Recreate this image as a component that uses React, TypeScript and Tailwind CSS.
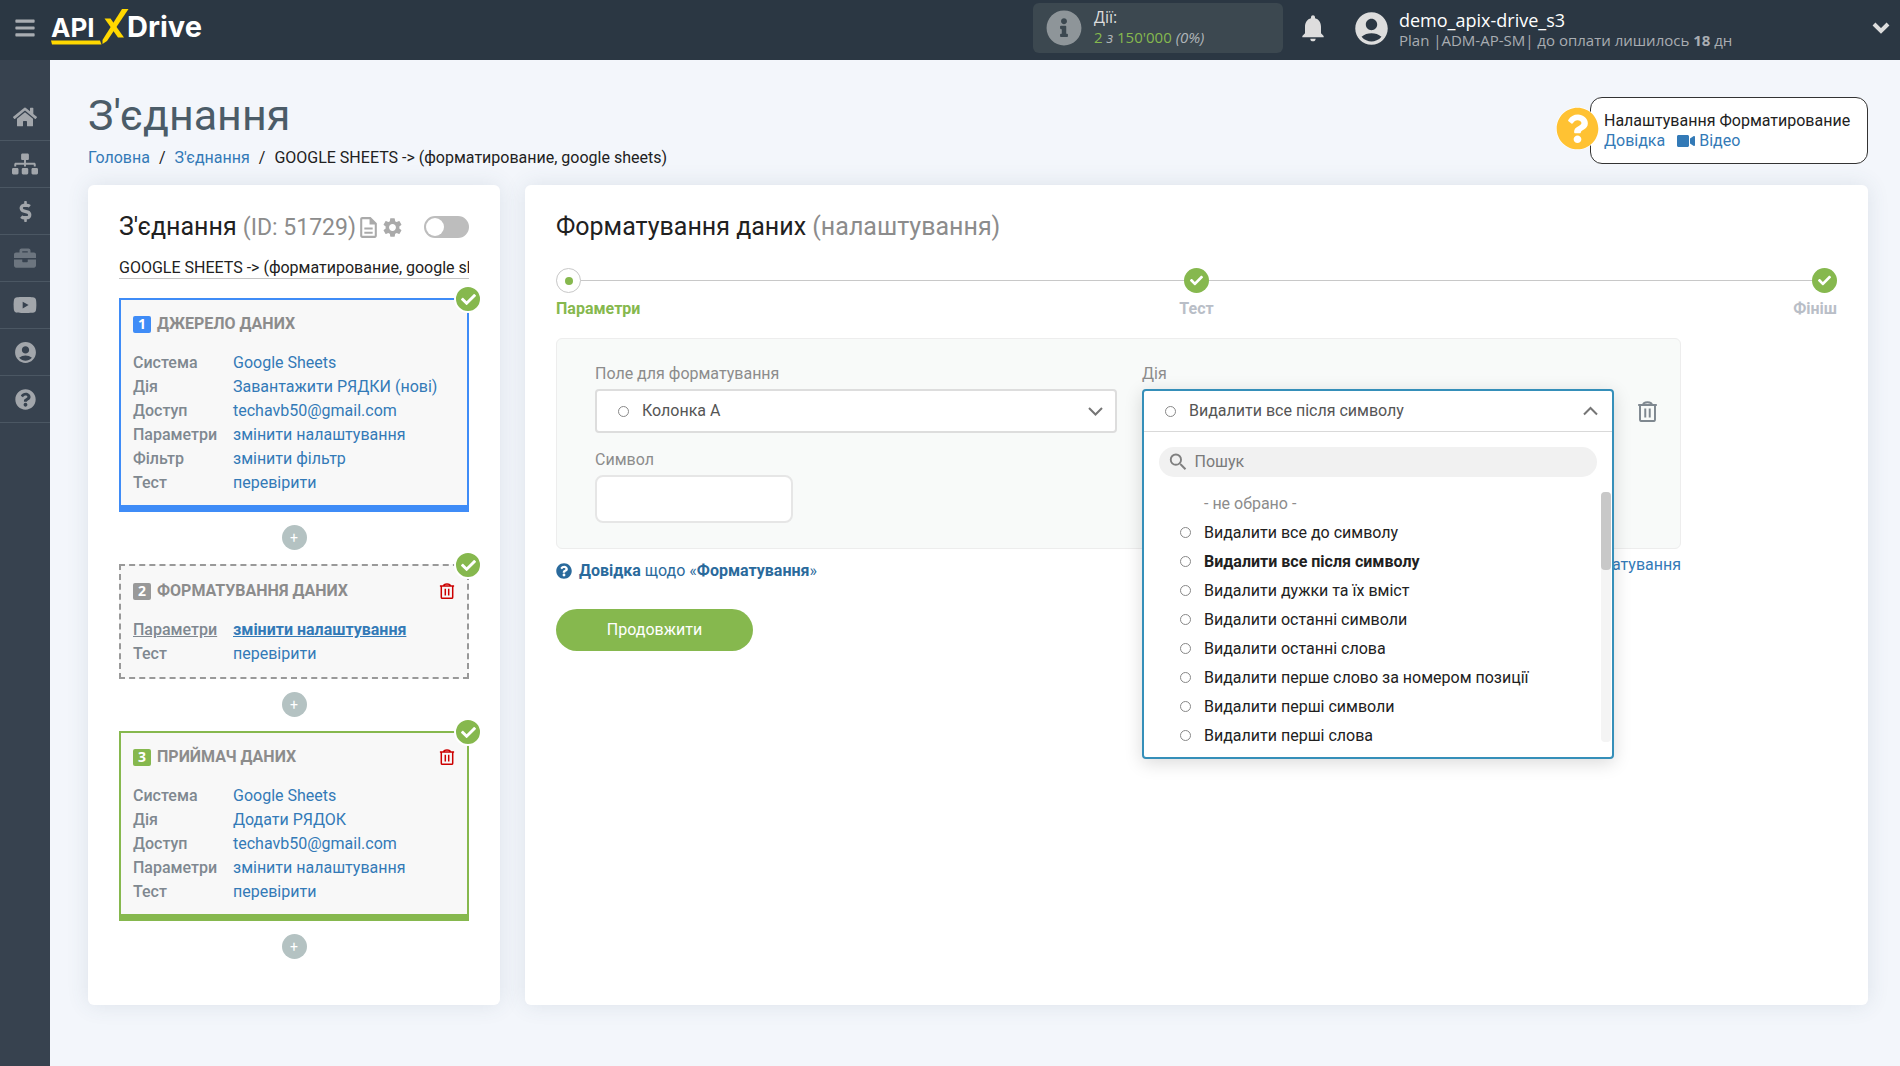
import { useState } from 'react';
import {
  FaBars,
  FaBriefcase,
  FaCheck,
  FaDollarSign,
  FaHome,
  FaInfoCircle,
  FaQuestionCircle,
  FaSitemap,
  FaVideo,
  FaYoutube,
} from 'react-icons/fa';
import { MdAccountCircle, MdNotifications, MdOutlineDescription, MdSearch, MdSettings } from 'react-icons/md';

type Row = { label: string; value: string; active?: boolean };

type Block = {
  number: number;
  title: string;
  rows: Row[];
  frame: string;
  badge: string;
  removable?: boolean;
};

const blocks: Block[] = [
  {
    number: 1,
    title: 'ДЖЕРЕЛО ДАНИХ',
    frame: 'border-2 border-b-7 border-[#3f8cf7] pt-3 pb-[10px]',
    badge: 'bg-[#3f8cf7]',
    rows: [
      { label: 'Система', value: 'Google Sheets' },
      { label: 'Дія', value: 'Завантажити РЯДКИ (нові)' },
      { label: 'Доступ', value: 'techavb50@gmail.com' },
      { label: 'Параметри', value: 'змінити налаштування' },
      { label: 'Фільтр', value: 'змінити фільтр' },
      { label: 'Тест', value: 'перевірити' },
    ],
  },
  {
    number: 2,
    title: 'ФОРМАТУВАННЯ ДАНИХ',
    frame: 'border-2 border-dashed border-[#999999] pt-[13px] pb-[11px]',
    badge: 'bg-[#999999]',
    removable: true,
    rows: [
      { label: 'Параметри', value: 'змінити налаштування', active: true },
      { label: 'Тест', value: 'перевірити' },
    ],
  },
  {
    number: 3,
    title: 'ПРИЙМАЧ ДАНИХ',
    frame: 'border-2 border-b-7 border-[#86b84e] pt-3 pb-[10px]',
    badge: 'bg-[#86b84e]',
    removable: true,
    rows: [
      { label: 'Система', value: 'Google Sheets' },
      { label: 'Дія', value: 'Додати РЯДОК' },
      { label: 'Доступ', value: 'techavb50@gmail.com' },
      { label: 'Параметри', value: 'змінити налаштування' },
      { label: 'Тест', value: 'перевірити' },
    ],
  },
];

const menu = [
  { label: 'Головна', icon: FaHome, size: 24 },
  { label: "З'єднання", icon: FaSitemap, size: 26 },
  { label: 'Оплата', icon: FaDollarSign, size: 21 },
  { label: 'Проєкти', icon: FaBriefcase, size: 22, dim: true },
  { label: 'Відео', icon: FaYoutube, size: 24 },
  { label: 'Профіль', icon: MdAccountCircle, size: 25 },
  { label: 'Довідка', icon: FaQuestionCircle, size: 21 },
];

const actions = [
  'Видалити все до символу',
  'Видалити все після символу',
  'Видалити дужки та їх вміст',
  'Видалити останні символи',
  'Видалити останні слова',
  'Видалити перше слово за номером позиції',
  'Видалити перші символи',
  'Видалити перші слова',
];

function TrashIcon({ size }: { size: number }) {
  return (
    <svg width={size} height={size} viewBox="0 0 16 16" fill="none" stroke="currentColor" strokeWidth="1.5">
      <path d="M0.9 3H15.1M4.7 3C4.7 0.2 11.3 0.2 11.3 3M2.3 3V14.2Q2.3 15.3 3.4 15.3H12.6Q13.7 15.3 13.7 14.2V3M6.3 5.8V12.6M9.7 5.8V12.6" />
    </svg>
  );
}

function Logo() {
  return (
    <a href="#" aria-label="APIXDrive" className="flex">
      <svg width="156" height="40" viewBox="0 0 156 40" className="font-['Inter',sans-serif]">
        <text x="1" y="29" fontSize="26" fontWeight="700" fill="#fff">API</text>
        <text x="77" y="29" fontSize="29" fontWeight="700" fill="#fff">Drive</text>
        <path d="M1 32.5H50L51.5 36.5H2Z" fill="#ffd800" />
        <path d="M72 1H78.5L57 33L52.5 36V32Z" fill="#ffd800" />
        <path d="M54.5 10.5H60.5L74 29.5H68Z" fill="#ffd800" />
      </svg>
    </a>
  );
}

function Header() {
  return (
    <header className="flex h-15 items-center bg-[#2b3743] pb-1 text-[#dddddd] font-['Open_Sans','Noto_Sans',sans-serif]">
      <button aria-label="Меню" className="flex w-[50px] justify-center text-[#a9adb2]">
        <FaBars size={22} />
      </button>
      <Logo />
      <div className="ml-auto flex h-[50px] w-[250px] items-center gap-3 rounded-md bg-[#3c4850] pl-[13px]">
        <FaInfoCircle size={36} className="text-[#8e9599]" />
        <div className="pb-[2px] text-[15px] leading-5">
          <div className="text-base leading-5">Дії:</div>
          <div className="italic text-[#b0b5b9]">
            <span className="not-italic text-[#86b84e]">2</span> з <span className="not-italic text-[#86b84e]">150'000</span> (0%)
          </div>
        </div>
      </div>
      <button aria-label="Сповіщення" className="ml-[14px] w-8">
        <MdNotifications size={32} />
      </button>
      <div className="ml-[23px] flex w-[520px] items-center gap-2">
        <MdAccountCircle size={39} />
        <div className="pt-1">
          <div className="text-lg leading-5 text-white">demo_apix-drive_s3</div>
          <div className="text-[15px] leading-5 text-[#a9adb2]">
            Plan |ADM-AP-SM| до оплати лишилось <b>18</b> дн
          </div>
        </div>
      </div>
      <button aria-label="Розгорнути" className="mr-[10px]">
        <svg width="18" height="14" viewBox="0 0 18 14" fill="none" stroke="currentColor" strokeWidth="4">
          <path d="M2 3L9 10L16 3" />
        </svg>
      </button>
    </header>
  );
}

function Sidebar() {
  return (
    <nav className="w-[50px] shrink-0 bg-[#37424f] pt-[34px]">
      {menu.map(({ label, icon: Icon, size, dim }) => (
        <a
          key={label}
          href="#"
          aria-label={label}
          className={`flex h-[47px] items-center justify-center border-b border-[#4b5763] ${dim ? 'text-[#6c757f]' : 'text-[#a2a6ab]'}`}
        >
          <Icon size={size} />
        </a>
      ))}
    </nav>
  );
}

function BlockCard({ block }: { block: Block }) {
  return (
    <section className={`relative bg-[#f8f8f8] px-3 ${block.frame}`}>
      <span className="absolute -top-[15px] -right-[15px] flex size-7 items-center justify-center rounded-full border-2 border-white bg-[#86b84e] text-white">
        <FaCheck size={15} />
      </span>
      <h3 className="flex h-6 items-center gap-[6px] text-base font-bold text-[#8c8c8c]">
        <span className={`flex h-[17px] w-[18px] items-center justify-center rounded-xs text-sm text-white font-['Open_Sans',sans-serif] ${block.badge}`}>
          {block.number}
        </span>
        {block.title}
        {block.removable && (
          <button aria-label="Видалити" className="ml-auto text-[#cc0000]">
            <TrashIcon size={16} />
          </button>
        )}
      </h3>
      <dl className="mt-[15px]">
        {block.rows.map((row) => (
          <div key={row.label} className="flex leading-6">
            <dt className="w-[100px] font-medium text-[#7f8890]">
              <span className={row.active ? 'underline' : ''}>{row.label}</span>
            </dt>
            <dd>
              <a href="#" className={row.active ? 'font-bold text-[#337ab7] underline' : 'text-[#337ab7]'}>{row.value}</a>
            </dd>
          </div>
        ))}
      </dl>
    </section>
  );
}

function ConnectionPanel() {
  return (
    <aside className="w-[412px] shrink-0 rounded-md bg-white px-[31px] pt-7 pb-8 shadow-[0_0_22px_rgba(60,80,110,0.12)]">
      <div className="flex h-7 items-center">
        <h2 className="text-[25px] leading-7 text-[#212121]">
          З'єднання <span className="text-[23px] text-[#8c8c8c]">(ID: 51729)</span>
        </h2>
        <MdOutlineDescription size={25} className="text-[#aaaaaa]" />
        <MdSettings size={23} className="text-[#aaaaaa]" />
        <input
          type="checkbox"
          aria-label="Увімкнути з'єднання"
          className="ml-auto h-[22px] w-[45px] appearance-none rounded-full border-2 border-[#bdbdbd] bg-[#bdbdbd] before:block before:size-[18px] before:rounded-full before:bg-white"
        />
      </div>
      <input
        aria-label="Назва з'єднання"
        defaultValue="GOOGLE SHEETS -> (форматирование, google sheets)"
        className="mt-4 mb-[19px] block h-[22px] w-full border-b border-[#c4c4c4] text-base text-[#212121] outline-none"
      />
      {blocks.map((block) => (
        <div key={block.number}>
          <BlockCard block={block} />
          <button
            aria-label="Додати блок"
            className="mx-auto mt-[13px] mb-[14px] flex size-[25px] items-center justify-center rounded-full bg-[#b4c2c2] text-sm leading-none text-white"
          >
            +
          </button>
        </div>
      ))}
    </aside>
  );
}

function Stepper() {
  return (
    <ol className="relative mt-[27px] flex justify-between font-bold text-[#b9bec7] before:absolute before:inset-x-0 before:top-3 before:h-px before:bg-[#c8c8c8]">
      <li className="relative w-[90px] text-[#86b84e]">
        <span className="flex size-[25px] items-center justify-center rounded-full border border-[#c8c8c8] bg-white">
          <i className="size-2 rounded-full bg-[#86b84e]" />
        </span>
        <span className="mt-1 block leading-6">Параметри</span>
      </li>
      {['Тест', 'Фініш'].map((step) => (
        <li key={step} className="relative flex w-[90px] flex-col items-center last:items-end">
          <span className="flex size-[25px] items-center justify-center rounded-full bg-[#86b84e] text-white">
            <FaCheck size={13} />
          </span>
          <span className="mt-1 block leading-6">{step}</span>
        </li>
      ))}
    </ol>
  );
}

function ActionSelect() {
  const [selected, setSelected] = useState(actions[1]);
  const [open, setOpen] = useState(true);

  return (
    <div className="relative h-11">
      <div className="absolute inset-x-0 top-0 z-10 rounded-sm border-2 border-[#358fb9] bg-white shadow-[0_4px_18px_rgba(0,0,0,0.15)]">
        <button
          aria-labelledby="action-label"
          aria-expanded={open}
          onClick={() => setOpen(!open)}
          className="flex h-[41px] w-full items-center border-b border-[#d9d9d9] pl-[21px] pr-[14px] text-[#555555]"
        >
          <span className="mr-[13px] size-[11px] rounded-full border border-[#888888]" />
          {selected}
          <svg width="15" height="10" viewBox="0 0 15 10" fill="none" stroke="#757575" strokeWidth="2" className="ml-auto">
            <path d="M1 8.5L7.5 2L14 8.5" />
          </svg>
        </button>
        {open && (
          <div className="pt-[15px] pb-[15px]">
            <label className="mx-[15px] flex h-[30px] items-center gap-[5px] rounded-full bg-[#f1f1f1] pl-2">
              <MdSearch size={24} className="text-[#808080]" />
              <input placeholder="Пошук" aria-label="Пошук" className="w-full outline-none placeholder:text-[#7a7a7a]" />
            </label>
            <div className="mt-[15px] flex justify-between pr-px">
              <div role="radiogroup" aria-labelledby="action-label" className="h-[250px] leading-[29px] text-[#212121]">
                <div className="-mt-[3px] pl-15 text-[#8c8c8c]">- не обрано -</div>
                {actions.map((action) => (
                  <label key={action} className={`flex items-center pl-9 ${action === selected ? 'font-bold' : ''}`}>
                    <input
                      type="radio"
                      name="action"
                      checked={action === selected}
                      onChange={() => setSelected(action)}
                      className="mr-[13px] size-[11px] appearance-none rounded-full border border-[#888888]"
                    />
                    {action}
                  </label>
                ))}
              </div>
              <div className="h-[250px] w-[10px] rounded-sm bg-[#f4f4f4]">
                <div className="h-[78px] rounded-sm bg-[#c8c8c8]" />
              </div>
            </div>
          </div>
        )}
      </div>
    </div>
  );
}

function FormattingPanel() {
  return (
    <section className="min-w-0 flex-1 rounded-md bg-white px-[31px] pt-7 pb-10 shadow-[0_0_22px_rgba(60,80,110,0.12)]">
      <h2 className="text-[25px] leading-7 text-[#212121]">
        Форматування даних <span className="text-[#8c8c8c]">(налаштування)</span>
      </h2>
      <Stepper />
      <div className="mr-[156px]">
        <div className="mt-[17px] grid grid-cols-[547fr_472fr_66px] rounded-md border border-[#ededed] bg-[#f8faf9] pt-6 pb-[25px] pl-[38px] text-[#8c8c8c]">
          <div className="pr-[25px]">
            <label htmlFor="field" className="mb-1 block leading-[22px]">Поле для форматування</label>
            <div className="flex h-11 items-center rounded-sm border-2 border-[#dddddd] bg-white pl-[21px] pr-3 text-[#555555]">
              <span className="mr-[13px] size-[11px] rounded-full border border-[#888888]" />
              <select id="field" className="flex-1 appearance-none outline-none">
                <option>Колонка A</option>
              </select>
              <svg width="15" height="10" viewBox="0 0 15 10" fill="none" stroke="#757575" strokeWidth="2">
                <path d="M1 2L7.5 8.5L14 2" />
              </svg>
            </div>
            <label htmlFor="symbol" className="mt-4 mb-1 block leading-[22px]">Символ</label>
            <input id="symbol" className="block h-12 w-[198px] rounded-lg border-2 border-[#e6e6e6] bg-white px-3 text-[#555555]" />
          </div>
          <div>
            <span id="action-label" className="mb-1 block leading-[22px]">Дія</span>
            <ActionSelect />
          </div>
          <button aria-label="Видалити поле" className="mt-9 h-6 justify-self-center text-[#7f8890]">
            <TrashIcon size={21} />
          </button>
        </div>
        <div className="flex justify-between text-[#337ab7]">
          <a href="#" className="mt-[10px] flex items-center gap-[7px] leading-6 text-[#2a6a9c]">
            <FaQuestionCircle size={16} />
            <span>
              <b>Довідка</b> щодо «<b>Форматування</b>»
            </span>
          </a>
          <a href="#" className="mt-1 leading-6">+ Додати форматування</a>
        </div>
      </div>
      <button className="mt-[26px] h-[42px] w-[197px] rounded-full bg-[#86b84e] text-white">Продовжити</button>
    </section>
  );
}

export default function App() {
  return (
    <div className="flex min-h-screen flex-col bg-[#f3f6fb] text-base font-['Roboto',sans-serif]">
      <Header />
      <div className="flex flex-1">
        <Sidebar />
        <main className="min-w-0 flex-1 pt-[30px] pr-8 pb-15 pl-[38px]">
          <div className="flex items-start justify-between">
            <div>
              <h1 className="text-[43px] leading-[50px] text-[#4b5c68]">З'єднання</h1>
              <nav aria-label="Шлях" className="mt-[6px] flex gap-[9px] leading-6 text-[#212121]">
                <a href="#" className="text-[#337ab7]">Головна</a>
                <span>/</span>
                <a href="#" className="text-[#337ab7]">З'єднання</a>
                <span>/</span>
                <span>GOOGLE SHEETS -&gt; (форматирование, google sheets)</span>
              </nav>
            </div>
            <div className="relative mt-[7px] h-[67px] w-[278px] rounded-xl border border-[#333333] bg-white px-[13px] pt-[13px] leading-5 text-[#212121]">
              <span className="absolute top-[9px] -left-[35px] rounded-full bg-white">
                <FaQuestionCircle size={43} className="text-[#ffc233]" />
              </span>
              <div>Налаштування Форматирование</div>
              <div className="flex gap-3 text-[#337ab7]">
                <a href="#">Довідка</a>
                <a href="#" className="flex items-center gap-1">
                  <FaVideo size={18} />
                  Відео
                </a>
              </div>
            </div>
          </div>
          <div className="mt-[15px] flex gap-[25px]">
            <ConnectionPanel />
            <FormattingPanel />
          </div>
        </main>
      </div>
    </div>
  );
}
